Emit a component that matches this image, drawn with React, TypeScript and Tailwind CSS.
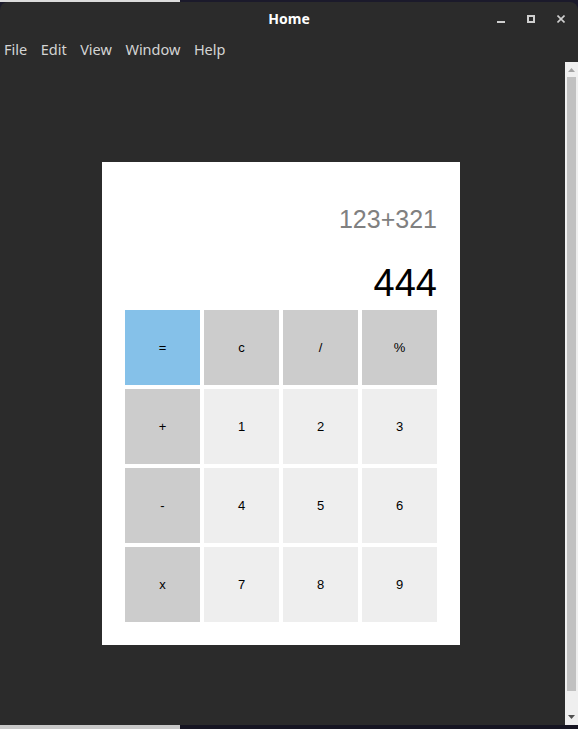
const keys = [
  { label: "=", tone: "bg-[#85c1e9]" },
  { label: "c", tone: "bg-[#cccccc]" },
  { label: "/", tone: "bg-[#cccccc]" },
  { label: "%", tone: "bg-[#cccccc]" },
  { label: "+", tone: "bg-[#cccccc]" },
  { label: "1", tone: "bg-[#eeeeee]" },
  { label: "2", tone: "bg-[#eeeeee]" },
  { label: "3", tone: "bg-[#eeeeee]" },
  { label: "-", tone: "bg-[#cccccc]" },
  { label: "4", tone: "bg-[#eeeeee]" },
  { label: "5", tone: "bg-[#eeeeee]" },
  { label: "6", tone: "bg-[#eeeeee]" },
  { label: "x", tone: "bg-[#cccccc]" },
  { label: "7", tone: "bg-[#eeeeee]" },
  { label: "8", tone: "bg-[#eeeeee]" },
  { label: "9", tone: "bg-[#eeeeee]" },
]

const menus = ["File", "Edit", "View", "Window", "Help"]

function Calculator() {
  return (
    <div className="w-[358px] bg-white px-[23px] pt-[41px] pb-[23px] font-['Liberation_Sans',Arial,sans-serif]">
      <div className="h-[32px] text-right text-[25px] leading-[32px] text-[#808080]">123+321</div>
      <div className="mt-[24px] h-[48px] text-right text-[38px] leading-[48px] text-black">444</div>
      <div className="mt-[3px] grid grid-cols-4 gap-[4px]">
        {keys.map((k) => (
          <button
            key={k.label}
            className={`flex h-[75px] items-center justify-center text-[13px] text-black ${k.tone}`}
          >
            {k.label}
          </button>
        ))}
      </div>
    </div>
  )
}

function Scrollbar() {
  return (
    <div className="flex w-[13px] flex-col bg-[#efefef]">
      <div className="flex h-[15px] items-center justify-center">
        <svg width="7" height="4" viewBox="0 0 7 4">
          <path d="M3.5 0L7 4H0z" fill="#a3a3a3" />
        </svg>
      </div>
      <div className="mx-[2px] flex-1 bg-[#c1c1c1]" />
      <div className="flex h-[34px] items-end justify-center pb-[6px]">
        <svg width="7" height="4" viewBox="0 0 7 4">
          <path d="M0 0H7L3.5 4z" fill="#505050" />
        </svg>
      </div>
    </div>
  )
}

export default function App() {
  return (
    <div className="flex h-[729px] w-[578px] flex-col overflow-hidden bg-[#1b1a2b]">
      <div className="flex h-[2px]">
        <div className="w-[180px] bg-[#dcdcdc]" />
        <div className="flex-1 bg-[#1b1a2b]" />
      </div>
      <div className="flex flex-1 flex-col rounded-t-[8px] bg-[#2b2b2b] font-['Noto_Sans',sans-serif]">
        <div className="relative flex h-[35px] items-center justify-center pb-[3px]">
          <span className="text-[14px] font-bold text-white">Home</span>
          <div className="absolute right-[13px] top-[13px] flex items-center gap-[22px]">
            <svg width="8" height="8" viewBox="0 0 8 8">
              <path d="M0 7H8" stroke="#cfcfcf" strokeWidth="2" />
            </svg>
            <svg width="8" height="8" viewBox="0 0 8 8">
              <rect x="1" y="1" width="6" height="6" fill="none" stroke="#cfcfcf" strokeWidth="2" />
            </svg>
            <svg width="8" height="8" viewBox="0 0 8 8">
              <path d="M0.5 0.5L7.5 7.5M7.5 0.5L0.5 7.5" stroke="#cfcfcf" strokeWidth="1.6" />
            </svg>
          </div>
        </div>
        <div className="flex h-[25px] items-center gap-[13.5px] pl-[4px] text-[14.5px] text-[#d4d4d4]">
          {menus.map((m) => (
            <span key={m}>{m}</span>
          ))}
        </div>
        <div className="flex flex-1">
          <div className="flex flex-1 items-start pl-[102px] pt-[100px]">
            <Calculator />
          </div>
          <Scrollbar />
        </div>
      </div>
      <div className="flex h-[4px]">
        <div className="w-[180px] bg-[#c8c8c8]" />
        <div className="flex-1 bg-[#161522]" />
      </div>
    </div>
  )
}
